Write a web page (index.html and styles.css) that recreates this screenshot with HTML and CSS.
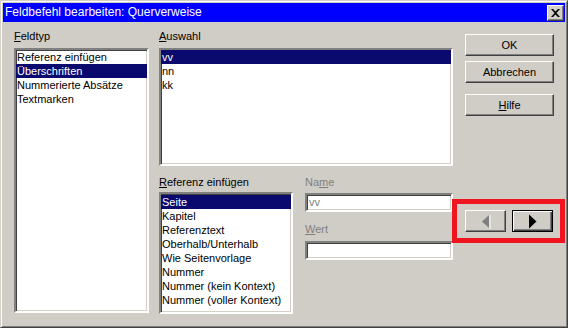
FILE: index.html
```html
<!DOCTYPE html>
<html>
<head>
  <title>Feldbefehl bearbeiten: Querverweise</title>
  <meta charset="utf-8">
  <link rel="stylesheet" href="styles.css">
</head>
<body>
  <div class="window">
    <div class="titlebar">
      <span class="title">Feldbefehl bearbeiten: Querverweise</span>
      <button class="close" title="Schließen">
        <svg width="9" height="8" viewBox="0 0 9 8"><path d="M0 0h2l2.5 2.5L7 0h2L5.5 4L9 8H7L4.5 5.5L2 8H0l3.5-4z" fill="#000"/></svg>
      </button>
    </div>

    <div class="content">
      <div class="colType">
        <label class="lbl"><u>F</u>eldtyp</label>
        <ul class="listbox typeList">
          <li>Referenz einfügen</li>
          <li class="sel">Überschriften</li>
          <li>Nummerierte Absätze</li>
          <li>Textmarken</li>
        </ul>
      </div>

      <div class="colMain">
        <label class="lbl"><u>A</u>uswahl</label>
        <ul class="listbox selectList">
          <li class="sel">vv</li>
          <li>nn</li>
          <li>kk</li>
        </ul>

        <div class="lower">
          <div class="refCol">
            <label class="lbl refLbl"><u>R</u>eferenz einfügen</label>
            <ul class="listbox refList">
              <li class="sel">Seite</li>
              <li>Kapitel</li>
              <li>Referenztext</li>
              <li>Oberhalb/Unterhalb</li>
              <li>Wie Seitenvorlage</li>
              <li>Nummer</li>
              <li>Nummer (kein Kontext)</li>
              <li>Nummer (voller Kontext)</li>
            </ul>
          </div>
          <div class="fields">
            <label class="lbl disabled">Na<u>m</u>e</label>
            <div class="field nameField">vv</div>
            <label class="lbl disabled wertLbl"><u>W</u>ert</label>
            <div class="field"></div>
          </div>
        </div>
      </div>

      <div class="colButtons">
        <button class="btn">OK</button>
        <button class="btn">Abbrechen</button>
        <button class="btn helpBtn"><u>H</u>ilfe</button>
        <div class="arrows">
          <button class="btn arrow" disabled>
            <svg width="10" height="15" viewBox="0 0 10 15"><path d="M8 1L1 7.5L8 14z" fill="#808080"/><path d="M9 1v14" stroke="#fff" stroke-width="1"/></svg>
          </button>
          <button class="btn arrow defaultBtn">
            <svg width="8" height="15" viewBox="0 0 8 15"><path d="M0 0.5L7.5 7.5L0 14.5z" fill="#000"/></svg>
          </button>
        </div>
      </div>
    </div>
  </div>
</body>
</html>
```

FILE: styles.css
```css
* {
  box-sizing: border-box;
}
body {
  margin: 0;
  font-family: "Liberation Sans", Arial, sans-serif;
  font-size: 11px;
  color: #000;
}
.window {
  width: 568px;
  height: 328px;
  padding: 2px;
  background: #d0ccc6;
  border: 1px solid;
  border-color: #d4d0c8 #404040 #404040 #d4d0c8;
  box-shadow: inset 1px 1px #fff, inset -1px -1px #808080;
}
.titlebar {
  height: 19px;
  background: #0000ff;
  display: flex;
  align-items: center;
  justify-content: space-between;
  padding: 0 1px 0 2px;
}
.title {
  color: #fff;
  font-family: "Liberation Sans", Arial, sans-serif;
  font-size: 12px;
  line-height: 19px;
}
.close {
  width: 17px;
  height: 16px;
  padding: 0;
  margin-top: 1px;
  background: #d4d0c8;
  border: 1px solid;
  border-color: #fff #404040 #404040 #fff;
  box-shadow: inset -1px -1px #808080;
  display: flex;
  align-items: center;
  justify-content: center;
}

.content {
  display: flex;
  padding: 8px 0 0 11px;
}
.lbl {
  display: block;
  line-height: 13px;
  height: 13px;
  white-space: nowrap;
}
.lbl.disabled {
  color: #808080;
}

.listbox {
  list-style: none;
  margin: 0;
  padding: 0;
  background: #fff;
  border: 2px solid;
  border-color: #808080 #fff #fff #808080;
  box-shadow: inset 1px 1px #404040, inset -1px -1px #d4d0c8;
  overflow: hidden;
}
.listbox li {
  line-height: 14px;
  height: 14px;
  padding-left: 1px;
  white-space: nowrap;
}
.listbox li.sel {
  background: #0a0a6e;
  color: #fff;
}

.colType {
  width: 135px;
}
.typeList {
  margin-top: 5px;
  height: 265px;
}

.colMain {
  width: 294px;
  margin-left: 10px;
}
.selectList {
  margin-top: 5px;
  height: 118px;
}
.lower {
  display: flex;
  margin-top: 10px;
}
.refCol {
  width: 134px;
}
.refList {
  margin-top: 3px;
  height: 122px;
  padding-top: 1px;
}
.fields {
  width: 148px;
  margin-left: 12px;
}
.field {
  height: 19px;
  margin-top: 4px;
  background: #fff;
  border: 2px solid;
  border-color: #808080 #fff #fff #808080;
  box-shadow: inset 1px 1px #404040, inset -1px -1px #d4d0c8;
  padding-left: 2px;
  line-height: 15px;
}
.nameField {
  color: #808080;
}
.wertLbl {
  margin-top: 11px;
  margin-bottom: 5px;
}

.colButtons {
  width: 89px;
  margin-left: 12px;
  margin-top: 4px;
  display: flex;
  flex-direction: column;
}
.btn {
  height: 22px;
  padding: 0;
  margin-bottom: 5px;
  font-family: inherit;
  font-size: 11px;
  color: #000;
  background: #d0ccc6;
  border: 1px solid;
  border-color: #fff #404040 #404040 #fff;
  box-shadow: inset -1px -1px #808080;
}
.helpBtn {
  margin-top: 6px;
}
.arrows {
  position: relative;
  display: flex;
  gap: 6px;
  margin-top: 89px;
}
.arrows::before {
  content: "";
  position: absolute;
  top: -11px;
  left: -13px;
  right: -11px;
  bottom: -11px;
  border: 5px solid #f0141e;
  pointer-events: none;
}
.arrow {
  width: 41px;
  margin: 0;
  display: flex;
  align-items: center;
  justify-content: center;
}
.defaultBtn {
  border: 1px solid #000;
  box-shadow: inset 1px 1px #fff, inset -1px -1px #404040, inset -2px -2px #808080;
}
```
